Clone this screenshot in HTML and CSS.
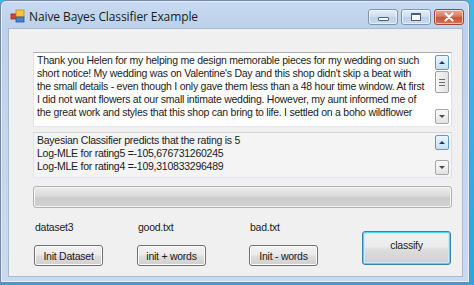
FILE: index.html
```html
<!DOCTYPE html>
<html>
<head>
<meta charset="utf-8">
<link rel="stylesheet" href="styles.css">
</head>
<body>
<div class="desktop">
  <div class="window">
    <div class="titlebar">
      <svg class="appicon" width="16" height="16" viewBox="0 0 16 16">
        <rect x="1" y="6" width="5" height="5" fill="#d8452b" stroke="#9a2a17" stroke-width="0.8"/>
        <rect x="6" y="2" width="8" height="7" fill="#f6c342" stroke="#c98a12" stroke-width="0.8"/>
        <rect x="6" y="9" width="8" height="5" fill="#4a7ed0" stroke="#2a5399" stroke-width="0.8"/>
      </svg>
      <span class="title">Naive Bayes Classifier Example</span>
      <div class="caption">
        <div class="cbtn cmin"><span class="minbar"></span></div>
        <div class="cbtn cmax"><span class="maxbox"></span></div>
        <div class="cbtn cclose">
          <svg width="12" height="10" viewBox="0 0 12 10"><path d="M2.5 1.5 L9.5 8.5 M9.5 1.5 L2.5 8.5" stroke="#fff" stroke-width="2.2" stroke-linecap="round"/></svg>
        </div>
      </div>
    </div>
    <div class="client">
      <div class="textbox tb1">
        <div class="text">Thank you Helen for my helping me design memorable pieces for my wedding on such<br>short notice! My wedding was on Valentine's Day and this shop didn't skip a beat with<br>the small details - even though I only gave them less than a 48 hour time window. At first<br>I did not want flowers at our small intimate wedding. However, my aunt informed me of<br>the great work and styles that this shop can bring to life. I settled on a boho wildflower</div>
        <div class="vscroll">
          <div class="sbtn sup"><span class="arrow up"></span></div>
          <div class="thumb"><span></span><span></span><span></span></div>
          <div class="track"></div>
          <div class="sbtn sdown"><span class="arrow down"></span></div>
        </div>
      </div>
      <div class="textbox tb2">
        <div class="text">Bayesian Classifier predicts that the rating is 5<br>Log-MLE for rating5 =-105,676731260245<br>Log-MLE for rating4 =-109,310833296489</div>
        <div class="vscroll">
          <div class="sbtn sup"><span class="arrow up"></span></div>
          <div class="track"></div>
          <div class="sbtn sdown"><span class="arrow down"></span></div>
        </div>
      </div>
      <div class="progress"></div>
      <div class="controls">
        <div class="col">
          <div class="lbl">dataset3</div>
          <button class="btn">Init Dataset</button>
        </div>
        <div class="col">
          <div class="lbl">good.txt</div>
          <button class="btn">init + words</button>
        </div>
        <div class="col">
          <div class="lbl">bad.txt</div>
          <button class="btn">Init - words</button>
        </div>
        <button class="btn classify">classify</button>
      </div>
    </div>
  </div>
</div>
</body>
</html>
```
FILE: styles.css
```css
* { box-sizing: border-box; }
html, body { margin: 0; padding: 0; }
body {
  width: 474px;
  height: 285px;
  overflow: hidden;
  font-family: "Liberation Sans", Arial, sans-serif;
  font-size: 10.5px;
  letter-spacing: -0.25px;
  color: #000;
}
.desktop {
  width: 474px;
  height: 285px;
  background: linear-gradient(to bottom, #3fb8e6, #2aa7d6);
}
.window {
  width: 470px;
  height: 283px;
  border: 1px solid #6f8aab;
  border-radius: 6px 6px 0 0;
  background: linear-gradient(to bottom, #c6daf0 0px, #bcd2ea 28px, #c2d6ec 120px, #c8dbef 283px);
  display: flex;
  flex-direction: column;
  box-shadow: inset 0 0 0 1px #e4eef9;
}
.titlebar {
  height: 27px;
  display: flex;
  align-items: center;
  padding-left: 9px;
}
.appicon { display: block; margin-top: 3px; }
.title {
  font-family: "Open Sans", "Noto Sans", sans-serif;
  font-size: 12px;
  letter-spacing: -0.1px;
  color: #1a1a1a;
  margin-left: 3px;
  margin-top: 3px;
}
.caption {
  margin-left: auto;
  margin-right: 5px;
  margin-top: 8px;
  align-self: flex-start;
  display: flex;
  gap: 3px;
}
.cbtn {
  height: 16px;
  border: 1px solid #7d95b4;
  border-radius: 3px;
  display: flex;
  align-items: center;
  justify-content: center;
  box-shadow: inset 0 0 0 1px rgba(255,255,255,0.6);
}
.cmin, .cmax {
  width: 30px;
  background: linear-gradient(to bottom, #e6eef8 0%, #cfdef0 45%, #bcd0e8 55%, #c9dbef 100%);
}
.cclose {
  width: 30px;
  border-color: #9a4a38;
  background: linear-gradient(to bottom, #eba996 0%, #d97a60 45%, #c85236 55%, #d8735a 100%);
}
.minbar {
  width: 11px;
  height: 4px;
  margin-top: 4px;
  background: #fff;
  border: 1px solid #4a5f7c;
  border-radius: 1px;
}
.maxbox {
  width: 10px;
  height: 8px;
  border: 1px solid #4a5f7c;
  border-top-width: 2px;
  background: #fff;
  box-shadow: inset 0 0 0 1px #fff;
}
.client {
  margin-left: 7px;
  width: 455px;
  height: 249px;
  background: #f0f0f0;
  border: 1px solid #a7bad1;
  padding: 23px 0 0 24px;
  display: flex;
  flex-direction: column;
}
.textbox {
  width: 419px;
  border: 1px solid #abadb3;
  border-left-color: #e2e3ea;
  border-right-color: #dbdfe6;
  border-bottom-color: #e3e9ef;
  display: flex;
}
.tb1 { height: 75px; background: #fff; }
.tb2 { height: 46px; margin-top: 5px; background: #f4f4f4; border-top-color: #d5d5d5; }
.text {
  flex: 1;
  padding: 1px 0 0 3px;
  line-height: 13px;
  white-space: nowrap;
  overflow: hidden;
  color: #1b1b1b;
}
.vscroll {
  width: 17px;
  display: flex;
  flex-direction: column;
  padding: 2px 2px 2px 1px;
}
.track { flex: 1; }
.sbtn {
  height: 15px;
  border: 1px solid #a7a7a7;
  border-radius: 2px;
  background: linear-gradient(to bottom, #fafafa, #e3e3e3);
  display: flex;
  align-items: center;
  justify-content: center;
}
.sup {
  border-color: #5a9ad0;
  background: linear-gradient(to bottom, #eaf5fd, #c4e3f7);
}
.thumb {
  height: 22px;
  margin-top: 1px;
  border: 1px solid #a2a2a2;
  border-radius: 2px;
  background: linear-gradient(to right, #f6f6f6, #e2e2e2);
  display: flex;
  flex-direction: column;
  align-items: center;
  justify-content: center;
  gap: 2px;
}
.thumb span {
  width: 6px;
  height: 1px;
  background: #6a6a6a;
}
.arrow {
  width: 0;
  height: 0;
  border-left: 3px solid transparent;
  border-right: 3px solid transparent;
}
.arrow.up { border-bottom: 3px solid #1f3c5c; }
.arrow.down { border-top: 3px solid #4a4a4a; }
.progress {
  width: 419px;
  height: 22px;
  margin-top: 8px;
  border: 1px solid #b2b2b2;
  border-radius: 3px;
  background: linear-gradient(to bottom, #ececec 0%, #dadada 45%, #cbcbcb 55%, #d3d3d3 100%);
  box-shadow: inset 0 0 0 1px #f4f4f4;
}
.controls {
  display: grid;
  grid-template-columns: 103px 112px 113px 89px;
  margin-top: 12px;
  margin-left: 1px;
  align-items: end;
}
.col { display: flex; flex-direction: column; }
.lbl { height: 13px; line-height: 13px; padding-left: 1px; color: #1b1b1b; }
.btn {
  font-family: "Liberation Sans", Arial, sans-serif;
  font-size: 10.5px;
  letter-spacing: -0.25px;
  color: #1b1b1b;
  width: 69px;
  height: 21px;
  margin-top: 11px;
  padding: 0;
  border: 1px solid #707070;
  border-radius: 3px;
  background: linear-gradient(to bottom, #f2f2f2 0%, #ebebeb 45%, #dddddd 55%, #cfcfcf 100%);
  box-shadow: inset 0 0 0 1px #fcfcfc;
}
.classify {
  width: 89px;
  height: 34px;
  margin-bottom: 1px;
  border-color: #3c7fb1;
  box-shadow: inset 0 0 0 1px #48d8fb, inset 0 0 0 2px #c7ebfa;
  padding-bottom: 6px;
}
```
